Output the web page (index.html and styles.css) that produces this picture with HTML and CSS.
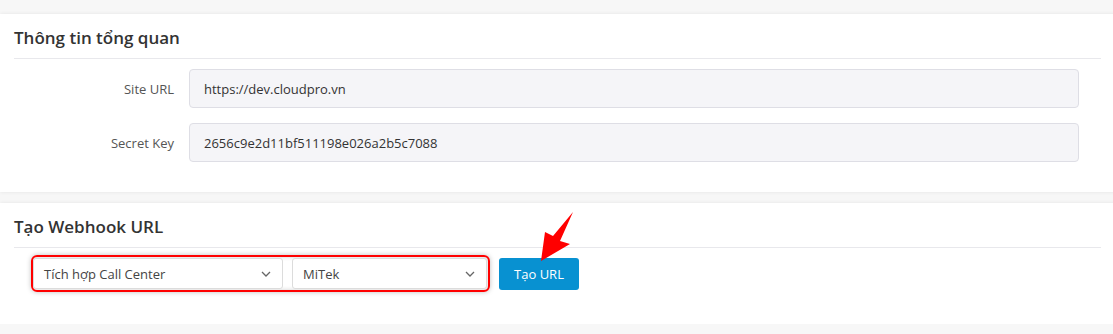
FILE: index.html
```html
<!DOCTYPE html>
<html lang="vi">
<head>
  <meta charset="UTF-8">
  <meta name="viewport" content="width=device-width, initial-scale=1.0">
  <link rel="stylesheet" href="styles.css">
  <title>Cấu hình tích hợp</title>
</head>
<body>

  <!-- Thông tin tổng quan -->
  <div class="card">
    <div class="card-header">Thông tin tổng quan</div>
    <div class="card-body info-body">
      <div class="form-row">
        <label for="siteUrl">Site URL</label>
        <input type="text" id="siteUrl" value="https://dev.cloudpro.vn" readonly>
      </div>
      <div class="form-row">
        <label for="secretKey">Secret Key</label>
        <input type="text" id="secretKey" value="2656c9e2d11bf511198e026a2b5c7088" readonly>
      </div>
    </div>
  </div>

  <!-- Tạo Webhook URL -->
  <div class="card webhook-card">
    <div class="card-header">Tạo Webhook URL</div>
    <div class="card-body webhook-body">
      <div class="highlight">
        <div class="select-box select-type">
          <span>Tích hợp Call Center</span>
          <svg class="caret" width="10" height="6" viewBox="0 0 10 6"><path d="M1 1l4 4 4-4" fill="none" stroke="#666" stroke-width="1.3"/></svg>
        </div>
        <div class="select-box select-provider">
          <span>MiTek</span>
          <svg class="caret" width="10" height="6" viewBox="0 0 10 6"><path d="M1 1l4 4 4-4" fill="none" stroke="#666" stroke-width="1.3"/></svg>
        </div>
      </div>
      <button class="btn-primary">Tạo URL</button>

      <!-- mũi tên chỉ vào nút -->
      <svg class="pointer-arrow" width="40" height="54" viewBox="536 208 40 54">
        <polygon points="541,260 545,231 553,235 573,211 560,240 570,243" fill="#f00"/>
      </svg>
    </div>
  </div>

</body>
</html>
```

FILE: styles.css
```css
body {
  margin: 0;
  padding-top: 14px;
  background-color: #f7f7f7;
  font-family: 'Open Sans', 'Noto Sans', sans-serif;
  font-size: 13px;
  color: #333;
}

.card {
  background-color: #fff;
  box-shadow: 0 0 4px rgba(0, 0, 0, 0.08);
  margin-right: -10px;
  padding: 0 22px 0 14px;
}

.card-header {
  font-size: 17px;
  font-weight: 600;
  color: #333;
  height: 45px;
  line-height: 48px;
  border-bottom: 1px solid #e8e8ec;
  box-sizing: border-box;
}

.info-body {
  padding: 10px 0 30px;
}

.form-row {
  display: grid;
  grid-template-columns: 160px 1fr;
  column-gap: 15px;
  align-items: center;
  margin-right: 22px;
  margin-bottom: 15px;
}

.form-row:last-child {
  margin-bottom: 0;
}

label {
  text-align: right;
  color: #555;
}

input {
  height: 39px;
  box-sizing: border-box;
  padding: 0 14px;
  border: 1px solid #dedee5;
  border-radius: 4px;
  background-color: #f5f5f8;
  font-family: inherit;
  font-size: 13px;
  color: #333;
  outline: none;
}

.webhook-card {
  margin-top: 11px;
}

.webhook-body {
  position: relative;
  display: flex;
  align-items: center;
  padding: 7px 0 32px 17px;
}

.highlight {
  display: flex;
  gap: 9px;
  padding: 1px 1px 1px 0;
  border: 2px solid #f00;
  border-radius: 6px;
  box-shadow: 0 0 5px rgba(0, 0, 0, 0.25), inset 0 0 4px rgba(0, 0, 0, 0.2);
}

.select-box {
  display: flex;
  align-items: center;
  justify-content: space-between;
  height: 31px;
  box-sizing: border-box;
  padding: 0 10px;
  border: 1px solid #dcdcdc;
  border-radius: 3px;
  background-color: #fff;
  color: #444;
}

.select-type {
  width: 250px;
}

.select-provider {
  width: 195px;
}

.caret {
  margin-right: 1px;
}

.btn-primary {
  margin-left: 9px;
  width: 80px;
  height: 32px;
  border: none;
  border-radius: 3px;
  background-color: #0891d1;
  color: #fff;
  font-family: inherit;
  font-size: 13px;
  cursor: pointer;
}

.pointer-arrow {
  position: absolute;
  left: 522px;
  top: -39px;
}
```
